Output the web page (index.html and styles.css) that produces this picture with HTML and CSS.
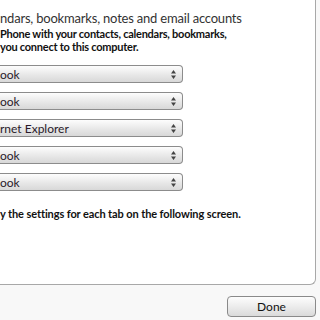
FILE: index.html
```html
<!DOCTYPE html>
<html lang="en">
  <head>
    <meta charset="UTF-8" />
    <title>Sync Settings</title>
    <link rel="stylesheet" href="styles.css">
  </head>
  <body>
    <div class="panel">
      <div class="title">ndars, bookmarks, notes and email accounts</div>
      <p class="intro">Phone with your contacts, calendars, bookmarks,<br>you connect to this computer.</p>

      <div class="choices">
        <div class="select"><span>ook</span><svg class="arrows" width="5" height="9" viewBox="0 0 5 9"><path d="M2.5 0L5 3.5H0z M2.5 9L5 5.5H0z" /></svg></div>
        <div class="select"><span>ook</span><svg class="arrows" width="5" height="9" viewBox="0 0 5 9"><path d="M2.5 0L5 3.5H0z M2.5 9L5 5.5H0z" /></svg></div>
        <div class="select"><span>rnet Explorer</span><svg class="arrows" width="5" height="9" viewBox="0 0 5 9"><path d="M2.5 0L5 3.5H0z M2.5 9L5 5.5H0z" /></svg></div>
        <div class="select"><span>ook</span><svg class="arrows" width="5" height="9" viewBox="0 0 5 9"><path d="M2.5 0L5 3.5H0z M2.5 9L5 5.5H0z" /></svg></div>
        <div class="select"><span>ook</span><svg class="arrows" width="5" height="9" viewBox="0 0 5 9"><path d="M2.5 0L5 3.5H0z M2.5 9L5 5.5H0z" /></svg></div>
      </div>

      <p class="note">y the settings for each tab on the following screen.</p>
    </div>
    <div class="footer">
      <button class="btn">Done</button>
    </div>
  </body>
</html>
```

FILE: styles.css
```css
body,
html {
  margin: 0;
  padding: 0;
  background-color: #f8f8f8;
  font-family: Lato, "Open Sans", Arial, sans-serif;
  color: #222;
}

/* main white area, its left side is off screen */
.panel {
  width: 316px;
  height: 285px;
  box-sizing: border-box;
  background-color: #fff;
  border-right: 1px solid #a8a8a8;
  border-bottom: 1px solid #a8a8a8;
  border-bottom-right-radius: 6px;
  padding-top: 9px;
}

.title {
  font-size: 13px;
  letter-spacing: -0.2px;
  color: #333;
  line-height: 18px;
  margin: 0;
}

.intro {
  font-size: 11px;
  font-weight: bold;
  letter-spacing: -0.25px;
  line-height: 13px;
  margin: 0;
  color: #111;
}

.choices {
  display: flex;
  flex-direction: column;
  gap: 9px;
  margin-top: 12px;
  width: 183px;
}

.select {
  height: 18px;
  box-sizing: border-box;
  display: flex;
  align-items: center;
  justify-content: space-between;
  padding: 0 6px 0 0;
  border: 1px solid #8c8c8c;
  border-left: none;
  border-radius: 0 4px 4px 0;
  background: linear-gradient(#fdfdfd, #e6e6e6 60%, #d8d8d8);
  font-size: 12px;
  color: #2a1a2a;
}

.arrows {
  fill: #444;
}

.note {
  font-size: 11px;
  font-weight: bold;
  letter-spacing: -0.1px;
  line-height: 15px;
  margin: 15px 0 0 0;
  color: #111;
}

.footer {
  display: flex;
  justify-content: flex-end;
  padding: 11px 4px 0 0;
}

.btn {
  width: 89px;
  height: 21px;
  font-family: Lato, "Open Sans", Arial, sans-serif;
  font-size: 12px;
  color: #111;
  border: 1px solid #8a8a8a;
  border-radius: 4px;
  background: linear-gradient(#fdfdfd, #ececec 50%, #dadada);
  padding: 0;
}
```
